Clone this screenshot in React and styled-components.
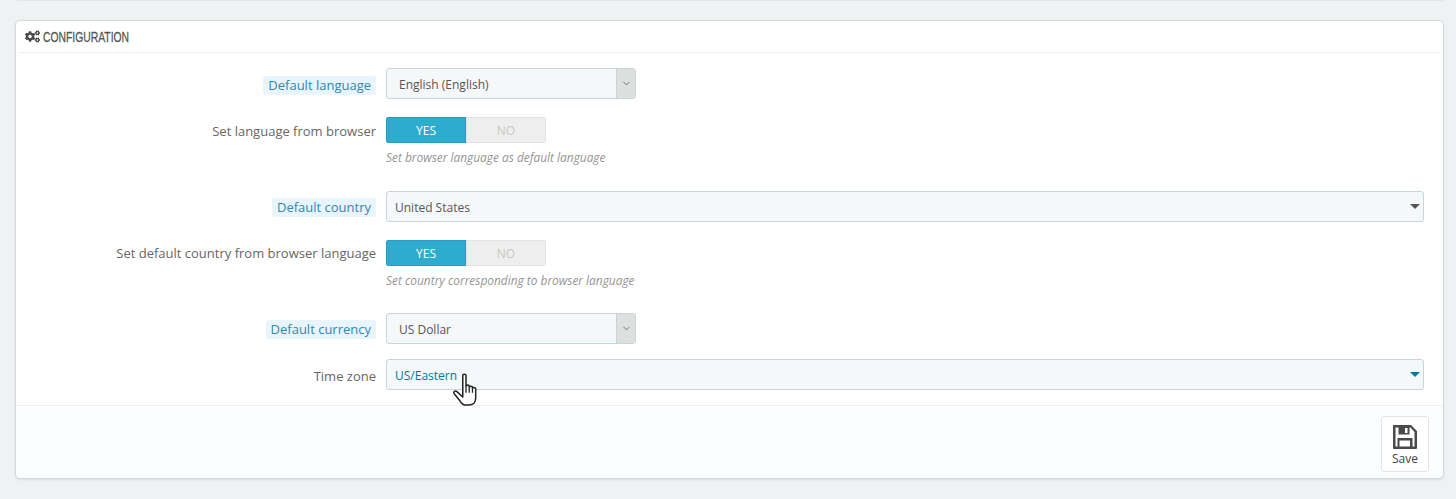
import React from 'react'
import styled, { createGlobalStyle } from 'styled-components'
import { FaCogs } from 'react-icons/fa'
import { FiChevronDown } from 'react-icons/fi'

const GlobalStyle = createGlobalStyle`
    html, body {
        margin: 0;
        background: #eff1f2;
        font-family: "Open Sans", "Liberation Sans", sans-serif;
        font-size: 12px;
        color: #666;
    }
`

const Page = styled.div`
    position: relative;
    height: 499px;
    overflow: hidden;
`

const TopStrip = styled.div`
    height: 1px;
    margin: 0 13px 19px 17px;
    background: #e2e5e7;
`

const Panel = styled.section`
    margin: 0 12px 0 15px;
    height: 459px;
    box-sizing: border-box;
    display: flex;
    flex-direction: column;
    background: #fff;
    border: 1px solid #d3d8db;
    border-radius: 5px;
    box-shadow: 0 1px 2px rgba(0, 0, 0, 0.08);
`

const PanelHeading = styled.h3`
    margin: 0 4px;
    height: 32px;
    box-sizing: border-box;
    padding: 0 0 0 5px;
    display: flex;
    align-items: center;
    gap: 3px;
    border-bottom: 1px solid #eee;
    font-family: "Liberation Sans", sans-serif;
    font-weight: 400;
    font-size: 15px;
    color: #555;
    svg { font-size: 15px; color: #4a4a4a; }
`

const HeadingText = styled.span`
    display: inline-block;
    -webkit-text-stroke: 0.3px #555;
    transform: scaleX(0.69);
    transform-origin: left center;
`

const Form = styled.div`
    flex: 1;
    padding-top: 15px;
`

const Row = styled.div`
    display: flex;
    align-items: flex-start;
    margin-bottom: ${p => p.$gap}px;
`

const LabelCol = styled.div`
    width: 360px;
    flex: none;
    display: flex;
    justify-content: flex-end;
    align-items: center;
    height: ${p => p.$height}px;
    margin-top: ${p => p.$top}px;
    margin-right: 10px;
`

const HintLabel = styled.label`
    padding: 0 5px;
    height: 19px;
    line-height: 19px;
    border-radius: 3px;
    background: #e8f5fc;
    color: #3586ae;
    font-size: 13px;
`

const PlainLabel = styled.label`
    color: #666;
    font-size: 13px;
`

const Control = styled.div`
    flex: none;
`

const SelectBox = styled.div`
    width: ${p => p.$wide ? 1038 : 250}px;
    height: 31px;
    box-sizing: border-box;
    display: flex;
    align-items: center;
    justify-content: space-between;
    padding-left: ${p => p.$wide ? 8 : 12}px;
    background: #f5f8f9;
    border: 1px solid #c7d6db;
    border-radius: 3px;
    color: ${p => p.$active ? '#00779e' : '#555'};
    font-size: 12px;
`

const SelectValue = styled.span`
    margin-top: 2px;
`

const ArrowBox = styled.span`
    width: 18px;
    height: 29px;
    display: flex;
    align-items: center;
    justify-content: center;
    background: #dedfdf;
    border-left: 1px solid #cfd1d1;
    border-radius: 0 2px 2px 0;
    color: #666;
    font-size: 11px;
`

const Caret = styled.span`
    width: 0;
    height: 0;
    border-left: 5px solid transparent;
    border-right: 5px solid transparent;
    border-top: 5px solid ${p => p.$active ? '#00779e' : '#555'};
    margin-right: 3px;
`

const Switch = styled.div`
    margin-top: 3px;
    width: 160px;
    height: 26px;
    display: flex;
    border-radius: 3px;
    overflow: hidden;
    font-size: 12px;
`

const SwitchSide = styled.span`
    flex: 1;
    display: flex;
    align-items: center;
    justify-content: center;
    background: ${p => p.$on ? '#2eacce' : '#eee'};
    color: ${p => p.$on ? '#fff' : '#c7c7c7'};
    box-shadow: ${p => p.$on ? 'inset 0 0 0 1px #2a9dbd' : 'inset 0 0 0 1px #e2e2e2'};
`

const Hint = styled.p`
    margin: 6px 0 0;
    height: 16px;
    line-height: 16px;
    font-size: 11.9px;
    font-style: italic;
    color: #959595;
`

const PanelFooter = styled.footer`
    height: 73px;
    box-sizing: border-box;
    padding: 10px 14px 0 0;
    display: flex;
    justify-content: flex-end;
    background: #fcfdfe;
    border-top: 1px solid #eee;
    border-radius: 0 0 5px 5px;
`

const SaveButton = styled.button`
    width: 48px;
    height: 56px;
    padding: 8px 0 0;
    box-sizing: border-box;
    display: flex;
    flex-direction: column;
    align-items: center;
    background: #fff;
    border: 1px solid #e2e5e7;
    border-radius: 3px;
    color: #444;
    font-family: inherit;
    font-size: 12px;
    line-height: 15px;
`

const SaveIcon = styled.svg`
    display: block;
    margin-bottom: 2px;
`

const Cursor = styled.svg`
    position: absolute;
    left: 452px;
    top: 372px;
`

const Select = ({ value, wide, active }) => (
    <SelectBox $wide={wide} $active={active}>
        <SelectValue>{value}</SelectValue>
        {wide
            ? <Caret $active={active} />
            : <ArrowBox><FiChevronDown /></ArrowBox>}
    </SelectBox>
)

const Toggle = () => (
    <Switch>
        <SwitchSide $on>YES</SwitchSide>
        <SwitchSide>NO</SwitchSide>
    </Switch>
)

export default function App() {
    return (
        <Page>
            <GlobalStyle />
            <TopStrip />
            <Panel>
                <PanelHeading><FaCogs /><HeadingText>CONFIGURATION</HeadingText></PanelHeading>
                <Form>
                    <Row $gap={15}>
                        <LabelCol $height={27} $top={4}><HintLabel>Default language</HintLabel></LabelCol>
                        <Control><Select value="English (English)" /></Control>
                    </Row>
                    <Row $gap={26}>
                        <LabelCol $height={26} $top={4}><PlainLabel>Set language from browser</PlainLabel></LabelCol>
                        <Control>
                            <Toggle />
                            <Hint>Set browser language as default language</Hint>
                        </Control>
                    </Row>
                    <Row $gap={15}>
                        <LabelCol $height={27} $top={3}><HintLabel>Default country</HintLabel></LabelCol>
                        <Control><Select value="United States" wide /></Control>
                    </Row>
                    <Row $gap={25}>
                        <LabelCol $height={26} $top={3}><PlainLabel>Set default country from browser language</PlainLabel></LabelCol>
                        <Control>
                            <Toggle />
                            <Hint>Set country corresponding to browser language</Hint>
                        </Control>
                    </Row>
                    <Row $gap={15}>
                        <LabelCol $height={27} $top={3}><HintLabel>Default currency</HintLabel></LabelCol>
                        <Control><Select value="US Dollar" /></Control>
                    </Row>
                    <Row $gap={15}>
                        <LabelCol $height={27} $top={3}><PlainLabel>Time zone</PlainLabel></LabelCol>
                        <Control><Select value="US/Eastern" wide active /></Control>
                    </Row>
                </Form>
                <PanelFooter>
                    <SaveButton>
                        <SaveIcon width="24" height="24" viewBox="0 0 24 24">
                            <path fillRule="evenodd" fill="#4a4a4a" d="M1 0 H18 L24 6 V23 Q24 24 23 24 H1 Q0 24 0 23 V1 Q0 0 1 0 Z M2.5 2.5 V21.5 H4.5 V13 H19.5 V21.5 H21.5 V7 L17.5 2.5 H16.5 V9.5 H5.5 V2.5 Z M6.5 15.5 V21.5 H17 V15.5 Z M12 3 V8 H14.5 V3 Z" />
                        </SaveIcon>
                        Save
                    </SaveButton>
                </PanelFooter>
            </Panel>
            <Cursor width="28" height="35" viewBox="0 0 26 32">
                <path
                    d="M10 3 C10 1.4 13 1.4 13 3 L13 13 C13 11.5 16 11.5 16 13 L16 14 C16 12.6 19 12.6 19 14 L19 15 C19 13.8 22 13.8 22 15.5 L22 24 C22 28 19.5 30.5 16 30.5 L13 30.5 C10 30.5 8.5 28.5 7 26 L2 20 C0.8 18.3 3 16.4 4.6 18 L10 23 Z"
                    fill="#fff"
                    stroke="#222"
                    strokeWidth="1.4"
                    strokeLinejoin="round"
                />
                <path d="M13 13 L13 19 M16 14 L16 19 M19 15 L19 19" stroke="#222" strokeWidth="1.2" fill="none" />
            </Cursor>
        </Page>
    )
}
